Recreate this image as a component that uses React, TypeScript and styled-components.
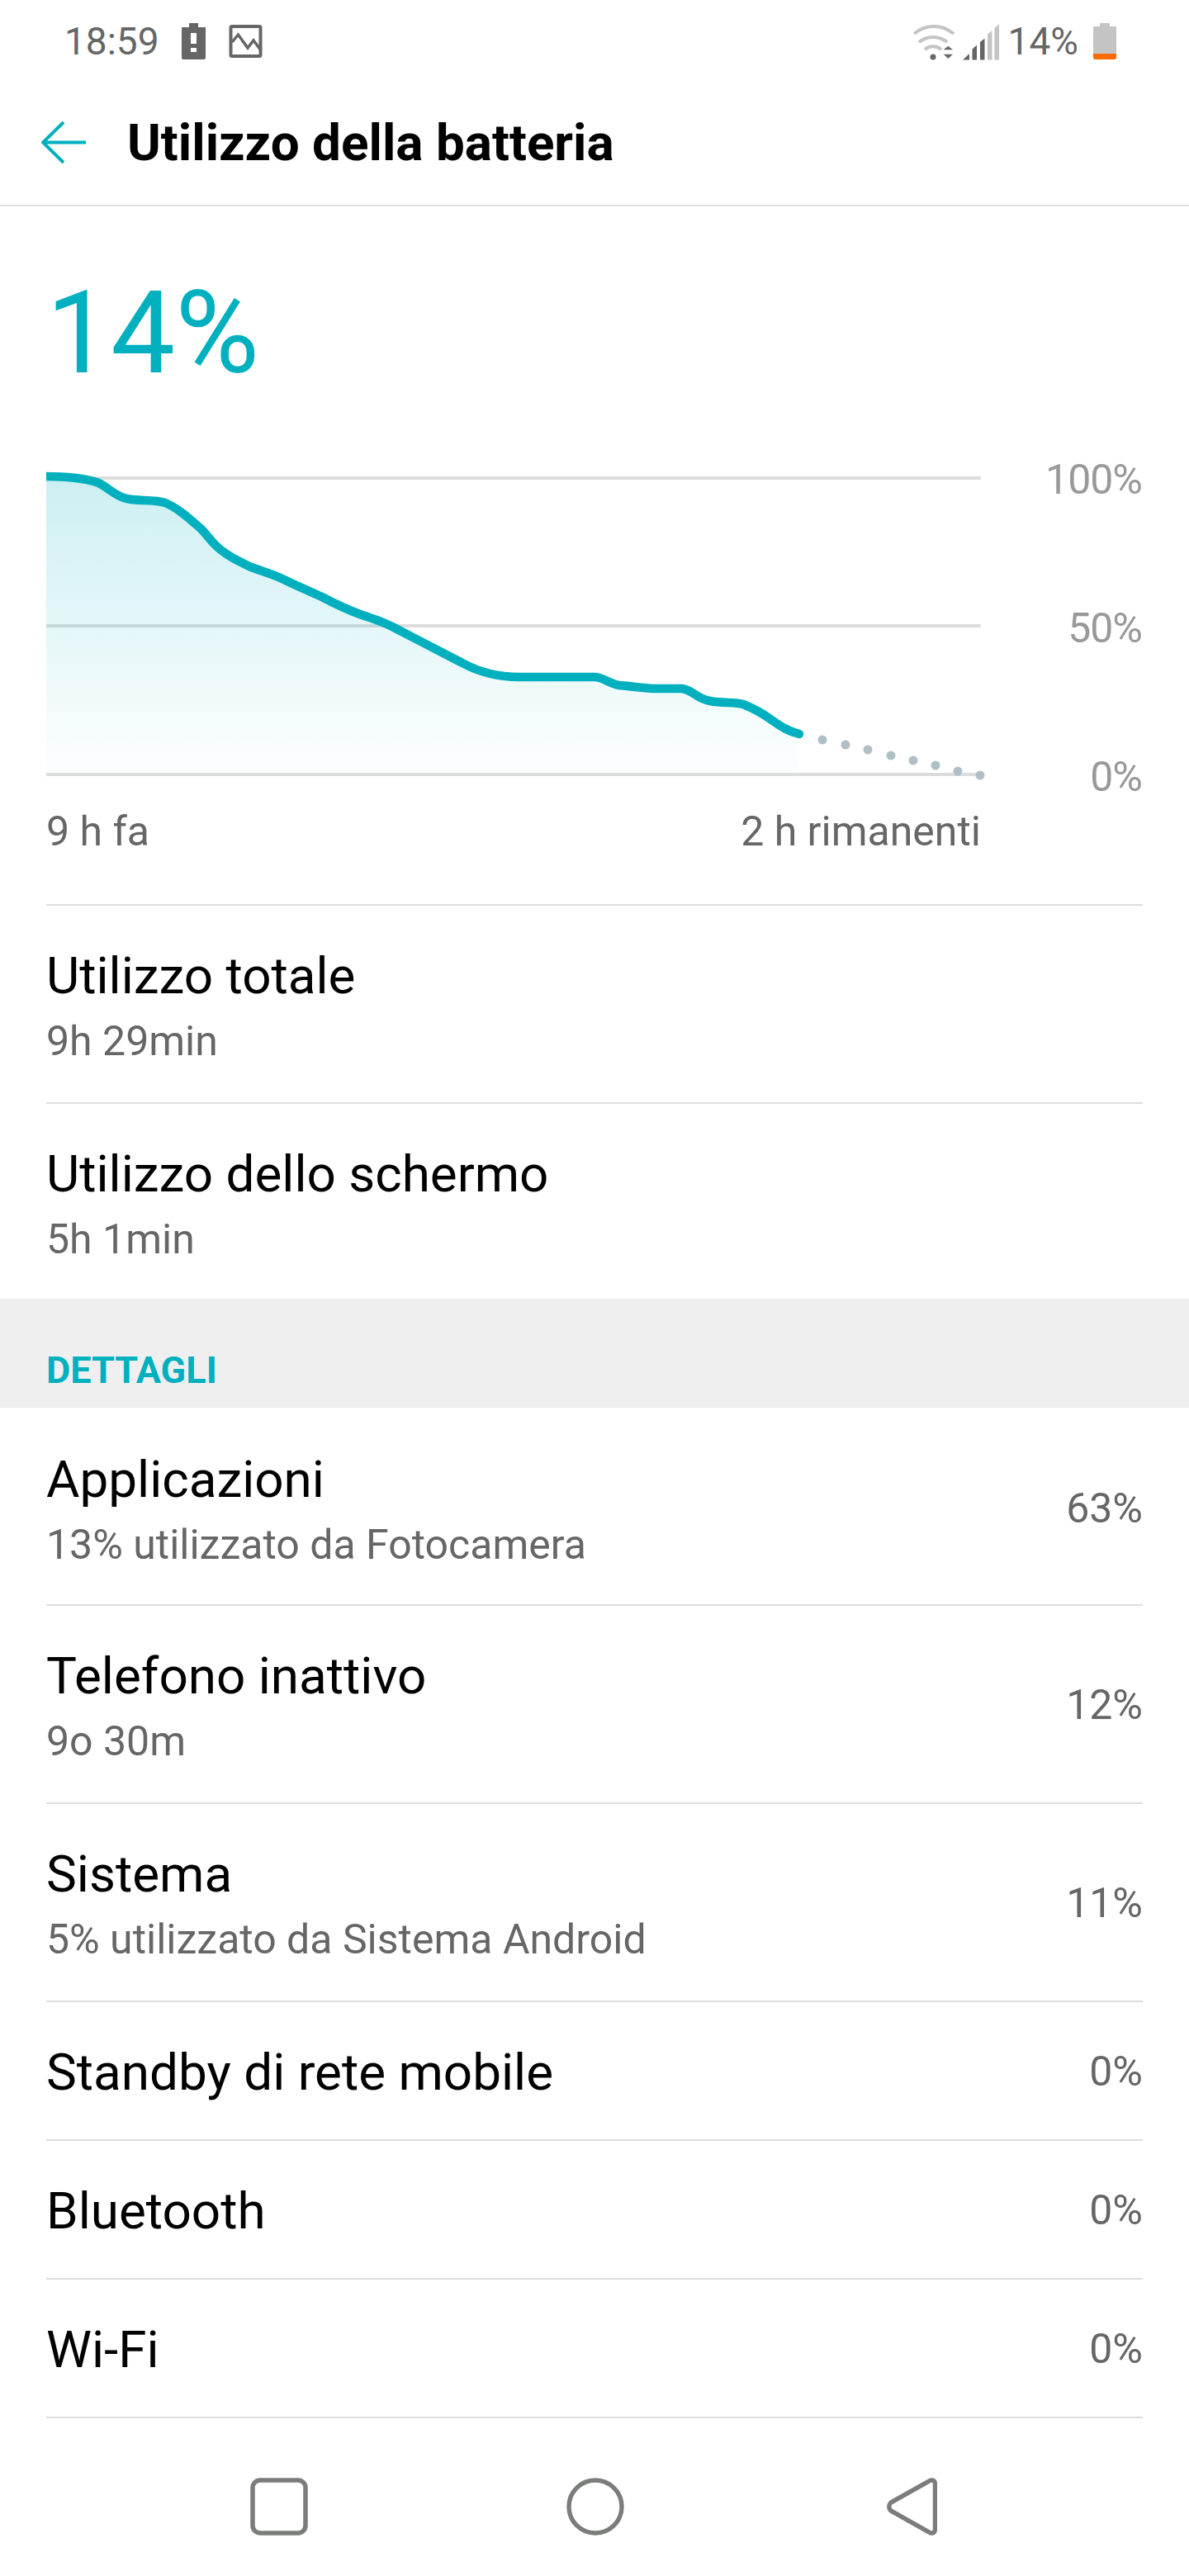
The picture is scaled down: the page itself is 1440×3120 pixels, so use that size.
import React from "react";
import styled, { createGlobalStyle } from "styled-components";

const GlobalStyle = createGlobalStyle`
  html, body {
    margin: 0;
    padding: 0;
    background: #fff;
  }
  body {
    font-family: Roboto, "Liberation Sans", sans-serif;
  }
`;

const Screen = styled.div`
  width: 1440px;
  height: 3120px;
  display: flex;
  flex-direction: column;
  background: #fff;
  overflow: hidden;
`;

const StatusBar = styled.div`
  height: 96px;
  padding: 3px 88px 0 78px;
  display: flex;
  align-items: center;
  justify-content: space-between;
  box-sizing: border-box;
`;

const StatusGroup = styled.div`
  display: flex;
  align-items: center;
`;

const StatusText = styled.span<{ $offset?: number }>`
  margin-left: ${(p) => p.$offset ?? 0}px;
  font-size: 46px;
  line-height: 54px;
  color: #666;
`;

const StatusSvg = styled.svg<{ $offset?: number }>`
  display: block;
  margin-left: ${(p) => p.$offset ?? 0}px;
`;

const Toolbar = styled.div`
  height: 154px;
  padding-left: 50px;
  display: flex;
  align-items: center;
  gap: 50px;
  border-bottom: 2px solid #ddd;
  box-sizing: border-box;
`;

const Title = styled.h1`
  margin: 0;
  font-size: 62px;
  font-weight: 700;
  color: #000;
`;

const BigPercent = styled.div`
  padding: 84px 0 0 56px;
  font-size: 139px;
  line-height: 140px;
  font-weight: 400;
  color: #00b0bf;
`;

const ChartArea = styled.div`
  margin-top: 66px;
  height: 437px;
`;

const ChartSvg = styled.svg`
  display: block;
`;

const AxisRow = styled.div`
  padding: 0 252px 0 56px;
  height: 60px;
  margin-bottom: 58px;
  display: flex;
  justify-content: space-between;
  align-items: center;
  font-size: 50px;
  line-height: 60px;
  color: #666;
`;

const Row = styled.div<{ $height: number; $noLine?: boolean }>`
  margin: 0 56px;
  height: ${(p) => p.$height}px;
  padding-top: 49px;
  box-sizing: border-box;
  border-top: 2px solid ${(p) => (p.$noLine ? "transparent" : "#ddd")};
  display: flex;
  align-items: flex-start;
  justify-content: space-between;
`;

const RowText = styled.div`
  display: flex;
  flex-direction: column;
  gap: 13px;
`;

const RowTitle = styled.div`
  font-size: 62px;
  line-height: 72px;
  color: #000;
`;

const RowSub = styled.div`
  font-size: 50px;
  line-height: 60px;
  color: #666;
`;

const RowValue = styled.div<{ $tall: boolean }>`
  margin-top: ${(p) => (p.$tall ? 41 : 5)}px;
  font-size: 50px;
  line-height: 60px;
  color: #666;
`;

const SectionHeader = styled.div`
  height: 132px;
  background: #efefef;
  padding: 61px 56px 0;
  box-sizing: border-box;
  font-size: 45px;
  line-height: 52px;
  font-weight: 700;
  color: #00b0bf;
`;

const NavBar = styled.div`
  margin: 0 56px;
  flex: 1;
  border-top: 2px solid #ddd;
  padding: 72px 0 0 247px;
  display: flex;
  align-items: flex-start;
  gap: 313px;
`;

const NavBackSvg = styled.svg`
  margin-left: 5px;
`;

const line =
  "M56 577 C75 577 100 579 117 584 C128 588 136 598 150 603 C165 608 185 604 200 609 C215 615 228 627 243 640 C253 650 258 660 270 668 C282 677 290 680 302 686 C320 693 330 695 344 702 C360 710 375 716 390 723 C405 731 420 738 436 744 C450 749 462 752 477 760 L560 803 C580 814 605 820 629 820 L720 820 C730 820 738 828 750 830 C765 831 780 834 798 834 L826 834 C840 836 843 846 860 849 C875 852 890 850 900 853 C913 858 925 865 936 873 C946 880 955 886 968 889";

const forecastDots = [
  [996, 896],
  [1024, 902],
  [1051, 908],
  [1079, 915],
  [1106, 921],
  [1133, 927],
  [1160, 934],
  [1187, 939],
];

const BatteryChart = () => (
  <ChartArea>
    <ChartSvg width="1440" height="437" viewBox="0 540 1440 437">
      <defs>
        <linearGradient id="fade" x1="0" y1="0" x2="0" y2="1">
          <stop offset="0" stopColor="#00b0bf" stopOpacity="0.2" />
          <stop offset="1" stopColor="#00b0bf" stopOpacity="0.01" />
        </linearGradient>
      </defs>
      {[579, 758, 938].map((y) => (
        <rect key={y} x="56" y={y - 2} width="1132" height="4" fill="#dcdcdc" />
      ))}
      <path d={`${line} L968 936 L56 936 Z`} fill="url(#fade)" />
      <path d={line} fill="none" stroke="#00b0bf" strokeWidth="10.5" strokeLinejoin="round" />
      <circle cx="968" cy="889" r="5.25" fill="#00b0bf" />
      {forecastDots.map(([x, y]) => (
        <circle key={x} cx={x} cy={y} r="5.5" fill="#b0bec5" />
      ))}
      <g fill="#999" fontSize="50" letterSpacing="-1" fontFamily="Roboto, sans-serif" textAnchor="end">
        <text x="1383" y="598">100%</text>
        <text x="1383" y="778">50%</text>
        <text x="1383" y="958">0%</text>
      </g>
    </ChartSvg>
  </ChartArea>
);

const BackArrow = () => (
  <svg width="54" height="51" viewBox="0 0 54 51" fill="none" stroke="#00b0bf" strokeWidth="4">
    <path d="M54 25.5H2M27 1L2 25.5L27 50" />
  </svg>
);

const StatusLeftIcons = () => (
  <StatusSvg $offset={27} width="100" height="44" viewBox="217 25 100 44">
    <path fill="#666" d="M226 25h11v5h9v37a2 2 0 0 1-2 2h-25a2 2 0 0 1-2-2V30h9z" />
    <rect x="228" y="37" width="7" height="13" fill="#fff" />
    <rect x="228" y="55" width="7" height="5" fill="#fff" />
    <rect x="276.5" y="29" width="36" height="36" rx="1.500" fill="none" stroke="#666" strokeWidth="4" />
    <path d="M278 48l7.500-9 11.500 16 7-9 9 12" fill="none" stroke="#666" strokeWidth="3.500" />
  </StatusSvg>
);

const WifiSignal = () => (
  <StatusSvg width="112" height="46" viewBox="1104 24 112 46">
    <g fill="none" stroke="#c4c4c4" strokeWidth="4">
      <path d="M1107 38c14-12 34-12 48 0" />
      <path d="M1113 48c10-8 24-8 34 0" />
      <path d="M1120 57c6-5 14-5 20 0" />
    </g>
    <circle cx="1130" cy="66" r="3.500" fill="#666" />
    <path d="M1142.700 57.300l5.600-4.600 5.700 4.600zM1142.700 62.700H1154l-5.700 5.300z" fill="#666" />
    <path d="M1166 69.500l8-7.500v7.500z" fill="#666" />
    <path d="M1177.500 69.500V56.500l5.500-5v18zM1187 69.500V48l5.500-4.500v26z" fill="#666" />
    <path d="M1196 69.500V38.500l5.500-4.500v35.500zM1204.500 69.500V31l5.500-5v43.500z" fill="#c4c4c4" />
  </StatusSvg>
);

const BatteryIcon = () => (
  <StatusSvg $offset={18} width="28" height="44" viewBox="0 0 28 44">
    <path d="M8 0h12v4h8v37a3 3 0 0 1-3 3H3a3 3 0 0 1-3-3V4h8z" fill="#c4c4c4" />
    <path d="M0 37h28v4a3 3 0 0 1-3 3H3a3 3 0 0 1-3-3z" fill="#ff6a00" />
  </StatusSvg>
);

const NavSquare = () => (
  <svg width="70" height="70" viewBox="0 0 70 70" fill="none" stroke="#7b7d7b" strokeWidth="5.500">
    <rect x="3" y="3" width="64" height="64" rx="9" />
  </svg>
);

const NavCircle = () => (
  <svg width="70" height="70" viewBox="0 0 70 70" fill="none" stroke="#7b7d7b" strokeWidth="5.500">
    <circle cx="35" cy="35" r="32" />
  </svg>
);

const NavBack = () => (
  <NavBackSvg width="61" height="70" viewBox="0 0 61 70" fill="none" stroke="#7b7d7b" strokeWidth="5.500">
    <path d="M50.500 4.500c3.500-3 8-1.500 8 3v55c0 4.500-4.500 6-8 3L5 40c-3-3-3-7 0-10z" />
  </NavBackSvg>
);

const summaryRows = [
  { title: "Utilizzo totale", sub: "9h 29min", height: 240 },
  { title: "Utilizzo dello schermo", sub: "5h 1min", height: 238 },
];

const detailRows = [
  { title: "Applicazioni", sub: "13% utilizzato da Fotocamera", value: "63%", height: 238 },
  { title: "Telefono inattivo", sub: "9o 30m", value: "12%", height: 240 },
  { title: "Sistema", sub: "5% utilizzato da Sistema Android", value: "11%", height: 240 },
  { title: "Standby di rete mobile", value: "0%", height: 168 },
  { title: "Bluetooth", value: "0%", height: 168 },
  { title: "Wi-Fi", value: "0%", height: 168 },
];

const App: React.FC = () => (
  <Screen>
    <GlobalStyle />
    <StatusBar>
      <StatusGroup>
        <StatusText>18:59</StatusText>
        <StatusLeftIcons />
      </StatusGroup>
      <StatusGroup>
        <WifiSignal />
        <StatusText $offset={5}>14%</StatusText>
        <BatteryIcon />
      </StatusGroup>
    </StatusBar>
    <Toolbar>
      <BackArrow />
      <Title>Utilizzo della batteria</Title>
    </Toolbar>
    <BigPercent>14%</BigPercent>
    <BatteryChart />
    <AxisRow>
      <span>9 h fa</span>
      <span>2 h rimanenti</span>
    </AxisRow>
    {summaryRows.map((r) => (
      <Row $height={r.height} key={r.title}>
        <RowText>
          <RowTitle>{r.title}</RowTitle>
          <RowSub>{r.sub}</RowSub>
        </RowText>
      </Row>
    ))}
    <SectionHeader>DETTAGLI</SectionHeader>
    {detailRows.map((r, i) => (
      <Row $height={r.height} $noLine={i === 0} key={r.title}>
        <RowText>
          <RowTitle>{r.title}</RowTitle>
          {r.sub && <RowSub>{r.sub}</RowSub>}
        </RowText>
        <RowValue $tall={!!r.sub}>{r.value}</RowValue>
      </Row>
    ))}
    <NavBar>
      <NavSquare />
      <NavCircle />
      <NavBack />
    </NavBar>
  </Screen>
);

export default App;
